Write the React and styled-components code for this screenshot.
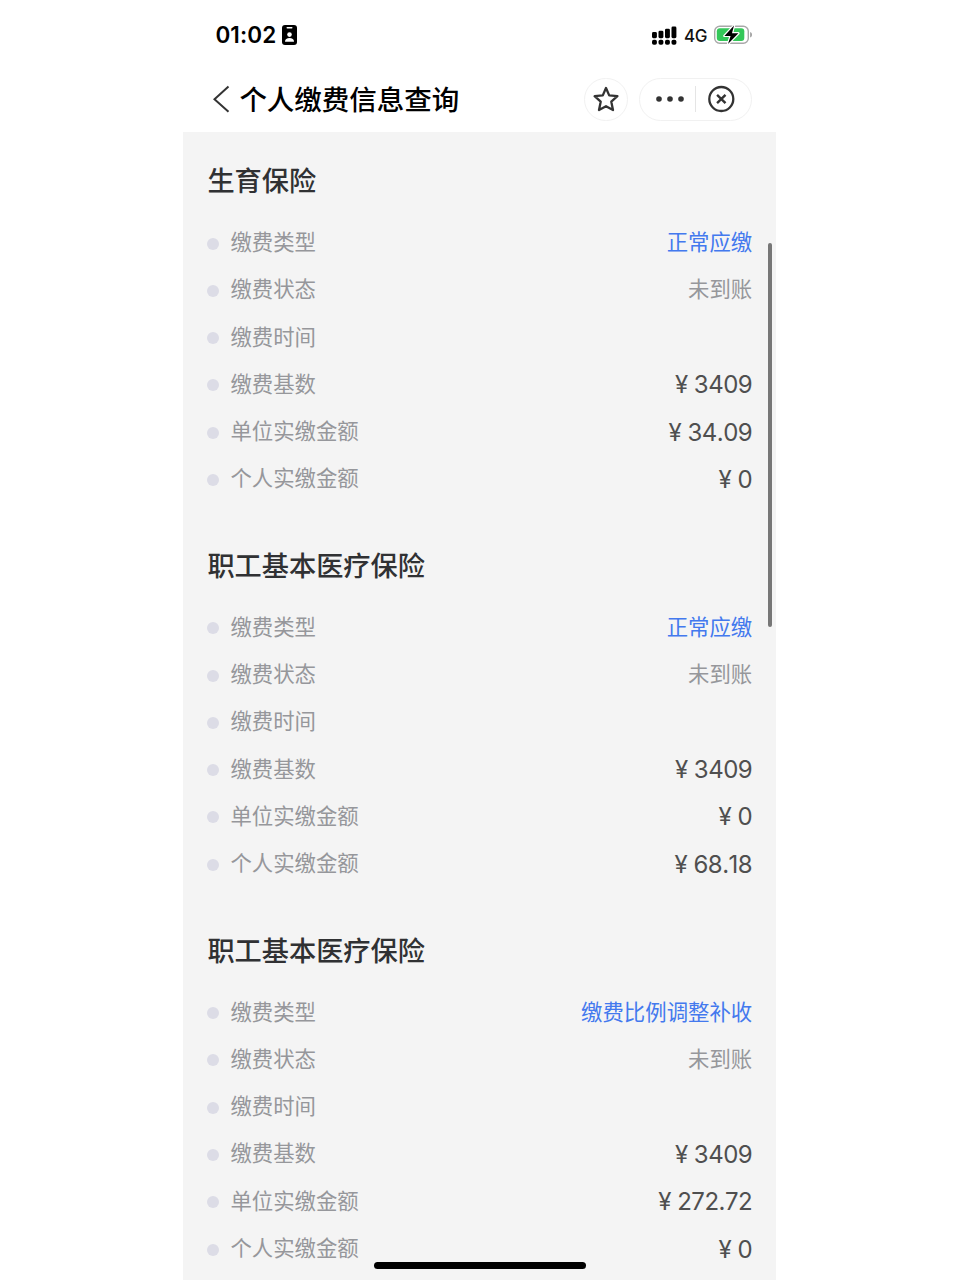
import React from 'react';
import styled, { createGlobalStyle } from 'styled-components';

const GlobalStyle = createGlobalStyle`
  * {
    box-sizing: border-box;
  }
  body {
    margin: 0;
    background-color: #ffffff;
    font-family: 'Inter', 'Noto Sans CJK SC', sans-serif;
    overflow: hidden;
  }
`;

const Phone = styled.div`
  position: relative;
  display: flex;
  flex-direction: column;
  width: 593px;
  height: 1280px;
  margin-left: 183.4px;
  overflow: hidden;
`;

const StatusBar = styled.div`
  display: flex;
  align-items: center;
  justify-content: space-between;
  height: 70px;
  padding: 0 23.4px 0 32px;
`;

const StatusGroup = styled.div`
  display: flex;
  align-items: center;
`;

const Clock = styled.span`
  width: 67px;
  margin-top: -1px;
  font-size: 22.5px;
  font-weight: 600;
  letter-spacing: 0.1px;
  color: #000000;
  white-space: nowrap;
`;

const Network = styled.span`
  width: 23px;
  margin: 1px 7px 0 7px;
  font-size: 17px;
  font-weight: 500;
  letter-spacing: -0.3px;
  color: #111111;
`;

const Header = styled.header`
  display: flex;
  align-items: center;
  justify-content: space-between;
  height: 61.5px;
  padding: 0 24.5px 3.5px 28.6px;
`;

const HeaderLeft = styled.div`
  display: flex;
  align-items: center;
`;

const HeaderTitle = styled.h1`
  margin: 2px 0 0 8.4px;
  font-size: 27.5px;
  font-weight: 500;
  line-height: 40px;
  color: #000000;
`;

const HeaderRight = styled.div`
  display: flex;
  gap: 11px;
`;

const RoundButton = styled.div`
  display: flex;
  align-items: center;
  justify-content: center;
  width: 44px;
  height: 43px;
  border: 1px solid #f1f1f1;
  border-radius: 22px;
`;

const Capsule = styled.div`
  display: flex;
  align-items: center;
  width: 113px;
  height: 43px;
  border: 1px solid #f1f1f1;
  border-radius: 22px;
`;

const CapsuleItem = styled.div`
  display: flex;
  align-items: center;
  justify-content: center;
  width: ${(props) => props.$width}px;
  padding-left: ${(props) => props.$shift || 0}px;
`;

const CapsuleLine = styled.div`
  width: 1px;
  height: 26px;
  background-color: #e5e5e5;
`;

const Content = styled.main`
  flex: 1;
  padding: 31.5px 24.2px 0 24px;
  background-color: #f4f4f4;
  overflow: hidden;
`;

const Section = styled.section`
  margin-bottom: 45.7px;
`;

const SectionTitle = styled.h2`
  height: 38px;
  margin: 0 0 17.5px;
  font-size: 27.2px;
  font-weight: 500;
  line-height: 38px;
  color: #303133;
`;

const Row = styled.div`
  display: flex;
  align-items: center;
  height: 47.27px;
`;

const Dot = styled.span`
  width: 12px;
  height: 12px;
  margin: 3px 11.5px 0 -0.5px;
  border-radius: 50%;
  background-color: #dcdce6;
`;

const Label = styled.span`
  flex: 1;
  font-size: 21.4px;
  line-height: 32px;
  color: #96979b;
`;

const Value = styled.span`
  font-size: 21.4px;
  line-height: 32px;
  color: ${(props) => (props.$link ? '#4379ee' : '#96979b')};
`;

const Amount = styled.span`
  margin-top: 3px;
  font-size: 24px;
  line-height: 32px;
  font-kerning: none;
  font-feature-settings: 'calt' 0;
  letter-spacing: -0.5px;
  color: #4f4f4f;
`;

const Scrollbar = styled.div`
  position: absolute;
  top: 243px;
  right: 4.5px;
  width: 4px;
  height: 384px;
  border-radius: 2px;
  background-color: #777777;
`;

const HomeIndicator = styled.div`
  position: absolute;
  left: 190.5px;
  bottom: 11px;
  width: 212px;
  height: 7px;
  border-radius: 4px;
  background-color: #000000;
`;

const BadgeIcon = () => (
  <svg width='15' height='20' viewBox='0 0 15 20'>
    <rect width='15' height='20' rx='3' fill='#000' />
    <rect x='4.5' y='2' width='6' height='1.5' rx='0.7' fill='#fff' />
    <circle cx='7.5' cy='9.6' r='2.3' fill='#fff' />
    <path d='M3 16.8c0-2.6 1.8-3.8 4.5-3.8s4.5 1.2 4.5 3.8z' fill='#fff' />
  </svg>
);

const SignalIcon = () => (
  <svg width='25' height='19' viewBox='0 0 25 19' fill='#000'>
    <rect x='0' y='6' width='4.9' height='6.2' rx='1.4' />
    <rect x='6.5' y='4.7' width='4.9' height='7.5' rx='1.4' />
    <rect x='13' y='2.7' width='4.9' height='9.5' rx='1.4' />
    <rect x='19.5' y='0.5' width='4.9' height='11.7' rx='1.4' />
    <rect x='0' y='13.8' width='4.9' height='4.9' rx='1.8' />
    <rect x='6.5' y='13.8' width='4.9' height='4.9' rx='1.8' />
    <rect x='13' y='13.8' width='4.9' height='4.9' rx='1.8' />
    <rect x='19.5' y='13.8' width='4.9' height='4.9' rx='1.8' />
  </svg>
);

const BatteryIcon = () => (
  <svg width='39' height='20' viewBox='0 0 39 20'>
    <rect
      x='0.7'
      y='1.2'
      width='33.6'
      height='17'
      rx='5'
      fill='none'
      stroke='#a8a8a8'
      strokeWidth='1.4'
    />
    <path d='M36.2 7v5.4c1.2-.5 1.7-1.4 1.7-2.7s-.5-2.2-1.7-2.7z' fill='#999' />
    <rect x='2.8' y='3.3' width='27.5' height='12.8' rx='3' fill='#34c759' />
    <path
      d='M20 .6 10.400 10.900h6.200L14 19 24.400 8.300h-6.400z'
      fill='#000'
      stroke='#fff'
      strokeWidth='2.4'
      strokeLinejoin='round'
      paintOrder='stroke'
    />
  </svg>
);

const BackIcon = () => (
  <svg width='19' height='28' viewBox='0 0 19 28' fill='none'>
    <path d='M16.5 1.5 2.5 14.3 16.5 26.7' stroke='#333' strokeWidth='2' />
  </svg>
);

const StarIcon = () => (
  <svg width='28' height='28' viewBox='0 0 28 28' fill='none'>
    <path
      d='M14 3 17.2 10.400 25.400 11.200 19.300 16.700 21 25 14 21.200 7 25 8.700 16.700 2.600 11.200 10.800 10.400z'
      stroke='#333'
      strokeWidth='2.3'
      strokeLinejoin='round'
    />
  </svg>
);

const MoreIcon = () => (
  <svg width='28' height='6' viewBox='0 0 28 6' fill='#333'>
    <circle cx='3' cy='3' r='2.8' />
    <circle cx='14' cy='3' r='2.8' />
    <circle cx='25' cy='3' r='2.8' />
  </svg>
);

const CloseIcon = () => (
  <svg width='28' height='28' viewBox='0 0 28 28' fill='none' stroke='#333'>
    <circle cx='14.3' cy='14' r='12' strokeWidth='2.3' />
    <path d='M10.1 9.8l8.4 8.4M18.5 9.8l-8.4 8.4' strokeWidth='2.4' />
  </svg>
);

const sections = [
  {
    title: '生育保险',
    type: '正常应缴',
    base: '3409',
    company: '34.09',
    personal: '0',
  },
  {
    title: '职工基本医疗保险',
    type: '正常应缴',
    base: '3409',
    company: '0',
    personal: '68.18',
  },
  {
    title: '职工基本医疗保险',
    type: '缴费比例调整补收',
    base: '3409',
    company: '272.72',
    personal: '0',
  },
];

const InfoRow = ({ label, children }) => (
  <Row>
    <Dot />
    <Label>{label}</Label>
    {children}
  </Row>
);

const InsuranceSection = ({ title, type, base, company, personal }) => (
  <Section>
    <SectionTitle>{title}</SectionTitle>
    <InfoRow label='缴费类型'>
      <Value $link>{type}</Value>
    </InfoRow>
    <InfoRow label='缴费状态'>
      <Value>未到账</Value>
    </InfoRow>
    <InfoRow label='缴费时间' />
    <InfoRow label='缴费基数'>
      <Amount>{`¥ ${base}`}</Amount>
    </InfoRow>
    <InfoRow label='单位实缴金额'>
      <Amount>{`¥ ${company}`}</Amount>
    </InfoRow>
    <InfoRow label='个人实缴金额'>
      <Amount>{`¥ ${personal}`}</Amount>
    </InfoRow>
  </Section>
);

const App = () => {
  return (
    <>
      <GlobalStyle />
      <Phone>
        <StatusBar>
          <StatusGroup>
            <Clock>01:02</Clock>
            <BadgeIcon />
          </StatusGroup>
          <StatusGroup>
            <SignalIcon />
            <Network>4G</Network>
            <BatteryIcon />
          </StatusGroup>
        </StatusBar>
        <Header>
          <HeaderLeft>
            <BackIcon />
            <HeaderTitle>个人缴费信息查询</HeaderTitle>
          </HeaderLeft>
          <HeaderRight>
            <RoundButton>
              <StarIcon />
            </RoundButton>
            <Capsule>
              <CapsuleItem $width={55} $shift={5}>
                <MoreIcon />
              </CapsuleItem>
              <CapsuleLine />
              <CapsuleItem $width={51}>
                <CloseIcon />
              </CapsuleItem>
            </Capsule>
          </HeaderRight>
        </Header>
        <Content>
          {sections.map((section, index) => (
            <InsuranceSection key={index} {...section} />
          ))}
        </Content>
        <Scrollbar />
        <HomeIndicator />
      </Phone>
    </>
  );
};

export default App;
